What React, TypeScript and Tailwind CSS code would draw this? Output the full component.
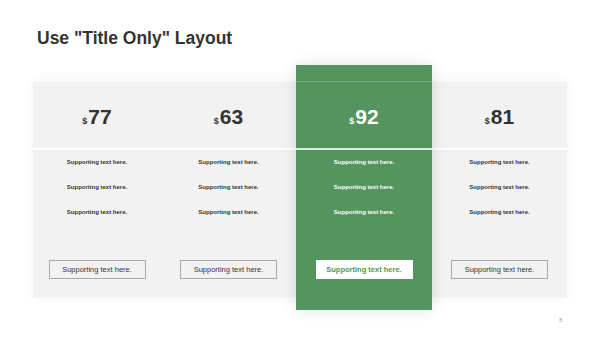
import React from 'react';

interface Plan {
  price: number;
  highlight?: boolean;
  width: string;
}

const plans: Plan[] = [
  { price: 77, width: 'w-[128px]' },
  { price: 63, width: 'w-[135px]' },
  { price: 92, width: 'w-[136px]', highlight: true },
  { price: 81, width: 'w-[135px]' },
];

const features = ['Supporting text here.', 'Supporting text here.', 'Supporting text here.'];

function PlanColumn({ plan }: { plan: Plan }) {
  const hl = plan.highlight;
  return (
    <div
      className={
        hl
          ? `${plan.width} flex flex-col bg-[#54945f] text-white mt-[-17px] mb-[-13px] pt-[17px] pb-[13px] shadow-[0_0_14px_rgba(0,0,0,0.12)] relative`
          : `${plan.width} flex flex-col text-[#333333]`
      }
    >
      {hl && <div className="absolute left-0 right-0 top-[16px] h-px bg-white/20" />}
      <div className="h-[66px] flex items-baseline justify-center pt-[24px]">
        <span className="font-bold text-[9px] mr-[1px]">$</span>
        <span className="font-bold text-[21px] leading-none">{plan.price}</span>
      </div>
      <div className={hl ? 'h-[2px] bg-white/80' : 'h-[2px] bg-white'} />
      <div className="flex flex-col">
        {features.map((f, i) => (
          <div key={i} className="h-[25px] flex items-center justify-center text-[6px] font-bold">
            {f}
          </div>
        ))}
      </div>
      <div className="mt-[35px] flex justify-center">
        {hl ? (
          <div className="w-[97px] h-[19px] bg-white text-[#54945f] font-bold text-[7.5px] flex items-center justify-center">
            Supporting text here.
          </div>
        ) : (
          <div className="w-[97px] h-[19px] border border-[#a9a9a9] text-[#333333] text-[7.5px] flex items-center justify-center">
            Supporting text here.
          </div>
        )}
      </div>
    </div>
  );
}

export default function App() {
  return (
    <div
      className="w-[600px] h-[337px] bg-white relative overflow-hidden"
      style={{ fontFamily: '"Liberation Sans", Arial, sans-serif' }}
    >
      <h1 className="pl-[37px] pt-[27px] text-[17.5px] leading-[22px] font-bold text-[#333333]">
        Use "Title Only" Layout
      </h1>
      <div className="mt-[33px] ml-[33px] w-[534px] h-[215px] flex bg-[#f2f2f2] shadow-[0_0_12px_rgba(0,0,0,0.06)]">
        {plans.map((p, i) => (
          <PlanColumn key={i} plan={p} />
        ))}
      </div>
      <div className="absolute right-[38px] bottom-[13px] text-[5px] text-[#999999]">8</div>
    </div>
  );
}
